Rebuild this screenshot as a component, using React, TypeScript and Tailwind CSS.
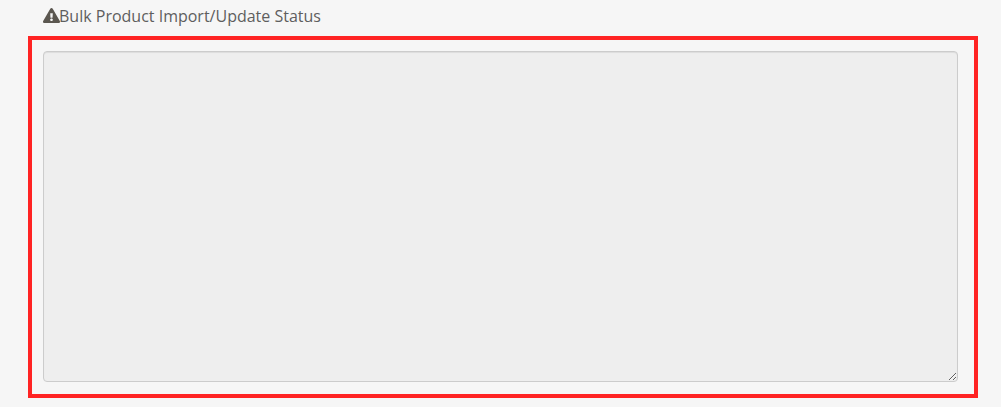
import { FaExclamationTriangle } from "react-icons/fa";

export default function App() {
  return (
    <div className="w-[1001px] h-[407px] overflow-hidden bg-[#f6f6f6] pt-[5px] pl-[28px] font-['Open_Sans',sans-serif]">
      <div className="flex items-center h-[22px] pl-[15px] text-[16px] text-[#5e5e5e]">
        <FaExclamationTriangle className="w-[17px] h-[17px] -mr-px -mt-px shrink-0 text-[#5b5750]" />
        <span>Bulk Product Import/Update Status</span>
      </div>
      <div className="mt-[9px] w-[950px] h-[362px] border-4 border-[#ff2323] pt-[11px] pl-[11px]">
        <textarea
          disabled
          className="block w-[915px] h-[331px] rounded-[4px] border border-[#cccccc] bg-[#eeeeee] shadow-[inset_0_1px_1px_rgba(0,0,0,0.075)] resize-y"
        />
      </div>
    </div>
  );
}
